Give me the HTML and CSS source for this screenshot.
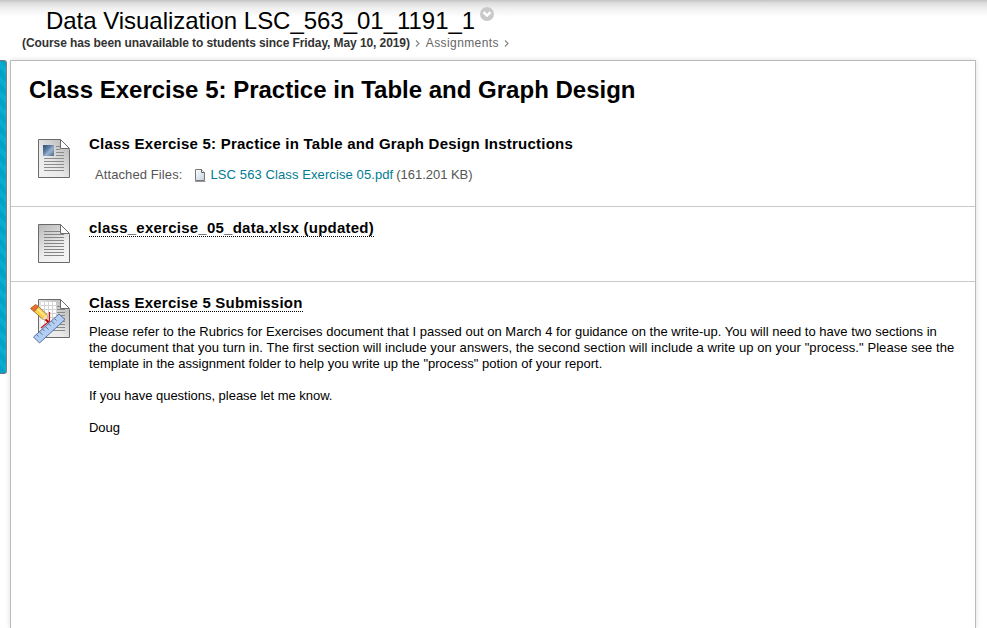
FILE: index.html
```html
<!DOCTYPE html>
<html lang="en">
<head>
<meta charset="utf-8">
<title>Assignments</title>
<link rel="stylesheet" href="styles.css">
</head>
<body>
<header class="crumbs">
  <div class="course"><span class="course-name">Data Visualization LSC_563_01_1191_1</span>
    <svg class="chevron" width="14" height="14" viewBox="0 0 14 14"><circle cx="7" cy="7" r="7" fill="#c9c9c9"/><path d="M3.500 5.200L7 8.500L10.500 5.200" fill="none" stroke="#fff" stroke-width="2.400"/></svg>
  </div>
  <nav class="path"><strong class="notice">(Course has been unavailable to students since Friday, May 10, 2019)</strong>
    <svg class="sep" width="5" height="7" viewBox="0 0 5 7"><path d="M1 .5L4 3.500L1 6.500" fill="none" stroke="#888" stroke-width="1.200"/></svg>
    <span class="crumb">Assignments</span>
    <svg class="sep" width="5" height="7" viewBox="0 0 5 7"><path d="M1 .5L4 3.500L1 6.500" fill="none" stroke="#888" stroke-width="1.200"/></svg>
  </nav>
</header>
<div class="frame">
  <aside class="menu-handle"></aside>
  <main class="content">
    <h1>Class Exercise 5: Practice in Table and Graph Design</h1>
    <section class="item first">
      <svg class="icon" width="42" height="48" viewBox="0 0 42 48">
        <defs><linearGradient id="paper" x1="1" y1="0" x2="0" y2="1"><stop offset="0" stop-color="#b0b0b0"/><stop offset=".6" stop-color="#e9e9e9"/><stop offset="1" stop-color="#f2f2f2"/></linearGradient>
        <linearGradient id="sheet" x1="0" y1="0" x2=".5" y2="1"><stop offset="0" stop-color="#b8b8b8"/><stop offset=".7" stop-color="#ececec"/><stop offset="1" stop-color="#f4f4f4"/></linearGradient>
        <linearGradient id="photo" x1="0" y1="0" x2="1" y2="1"><stop stop-color="#315277"/><stop offset=".35" stop-color="#56779c"/><stop offset=".6" stop-color="#9bb4d0"/><stop offset="1" stop-color="#49698e"/></linearGradient></defs>
        <path d="M8.500 1.500H30.500L39.500 11.500V39.500H8.500Z" fill="url(#paper)" stroke="#6a6a6a"/>
        <path d="M30.500 1.500V10.500H39.500Z" fill="#fff" stroke="#6a6a6a"/>
        <path d="M26 8.500h4M26 11.500h4M26 14.500h8M26 17.500h8M14 20.500h20M14 23.500h20M14 26.500h20M14 29.500h20M14 32.500h20" stroke="#8b8b8b"/>
        <rect x="13" y="7" width="11" height="11" fill="url(#photo)"/>
      </svg>
      <div class="body">
        <h2><span class="t1">Class Exercise 5: Practice in Table and Graph Design Instructions</span></h2>
        <div class="files"><span class="label">Attached Files:</span>
          <svg class="file" width="12" height="13" viewBox="0 0 12 13"><defs><linearGradient id="leaf" x1="0" y1="0" x2="1" y2="1"><stop stop-color="#fff"/><stop offset="1" stop-color="#c2d0dc"/></linearGradient></defs><path d="M1.500 .5H7.500L10.500 3.500V11.500H1.500Z" fill="url(#leaf)" stroke="#777"/><path d="M7.500 .5V3.500H10.500" fill="#fff" stroke="#666"/><path d="M1 12.500H11.500" stroke="#999"/></svg>
          <a class="link">LSC 563 Class Exercise 05.pdf</a><span class="size">(161.201 KB)</span>
        </div>
      </div>
    </section>
    <section class="item second">
      <svg class="icon" width="42" height="48" viewBox="0 0 42 48">
        <path d="M8.500 1.500H30.500L39.500 11.500V39.500H8.500Z" fill="url(#sheet)" stroke="#6a6a6a"/>
        <path d="M30.500 1.500V10.500H39.500Z" fill="#fff" stroke="#6a6a6a"/>
        <path d="M14 8.500h16M14 11.500h20M14 14.500h20M14 17.500h20M14 20.500h20M14 23.500h20M14 26.500h20M14 29.500h20M14 32.500h20" stroke="#858585"/>
      </svg>
      <div class="body"><h2><span class="dotted t2">class_exercise_05_data.xlsx (updated)</span></h2></div>
    </section>
    <section class="item third">
      <svg class="icon" width="42" height="48" viewBox="0 0 42 48">
        <path d="M8.500 1.500H30.500L39.500 11.500V39.500H8.500Z" fill="url(#paper)" stroke="#6a6a6a"/>
        <path d="M30.500 1.500V10.500H39.500Z" fill="#fff" stroke="#6a6a6a"/>
        <path d="M11 4H26V26H11Z" fill="#fff"/>
        <path d="M11 7.500H26M11 11.500H26M11 15.500H26M11 19.500H26M14.500 4V26M18.500 4V26M22.500 4V26" stroke="#d2d2d2"/>
        <path d="M27 8.500h3M27 11.500h8M27 14.500h8M27 17.500h8M25 20.500h10M25 23.500h10M25 26.500h10M20 29.500h15M17 32.500h18" stroke="#888"/>
        <path d="M19.500 14V23L11 30" stroke="#c01818" stroke-width="1.200" fill="none"/>
        <path d="M29 16L35 21.500L9.500 45L3.500 39Z" fill="#b2cff3" stroke="#5871a0"/>
        <path d="M6.500 36.500l2 2M9.500 33.800l3 3M12.500 31.100l2 2M15.500 28.500l3 3M18.500 25.800l2 2M21.500 23.100l3 3M24.500 20.500l2 2" stroke="#5871a0"/>
        <path d="M4 13.500L8.500 8.500L17 16.500L17.500 22.500L12.500 21Z" fill="#ffd04c" stroke="#806536" stroke-width=".8"/>
        <path d="M7.500 11L14.500 17.500" stroke="#fff0a0" stroke-width="1.200"/>
        <path d="M.5 10.500L5.500 6.500L8.500 8.500L4 13.500Z" fill="#e8712c" stroke="#a85726" stroke-width=".8"/>
        <path d="M12.500 21L17 16.500L18 22.500Z" fill="#f5dfb9"/><path d="M15.500 21.500L18.500 24" stroke="#c10000" stroke-width="2"/>
      </svg>
      <div class="body"><h2><span class="dotted t3">Class Exercise 5 Submission</span></h2>
        <div class="copy"><p><span class="l1">Please refer to the Rubrics for Exercises document that I passed out on March 4 for guidance on the write-up. You will need to have two sections in</span><br><span class="l2">the document that you turn in. The first section will include your answers, the second section will include a write up on your "process." Please see the</span><br><span class="l3">template in the assignment folder to help you write up the "process" potion of your report.</span></p>
        <p class="l4">If you have questions, please let me know.</p><p class="l4">Doug</p></div>
      </div>
    </section>
  </main>
</div>
</body>
</html>
```
FILE: styles.css
```css
* { box-sizing: border-box; }
html { height: 100%; overflow: hidden; }
body { margin: 0; height: 628px; display: flex; flex-direction: column; font-family: "Liberation Sans", Arial, sans-serif; color: #000; background: #fff; overflow: hidden; white-space: nowrap; }
svg { display: block; flex: none; }
.crumbs { height: 60px; flex: none; padding-top: 7px; background: linear-gradient(#c4c4c4 0, #dedede 3px, #f1f1f1 9px, #fff 17px); }
.course { display: flex; height: 28px; padding-left: 46px; font-size: 24px; line-height: 28px; letter-spacing: -.028px; }
.chevron { margin-left: 5px; }
.path { display: flex; align-items: center; height: 16px; padding-left: 22px; font-size: 12px; line-height: 16px; }
.notice { color: #333; letter-spacing: -.09px; }
.sep { margin: 1px 5.5px 0; }
.crumb { color: #666; letter-spacing: .4px; }
.frame { display: flex; flex: 1; min-height: 0; }
.menu-handle { width: 7px; height: 314px; margin-right: 3px; border: 1px solid #777; border-left: 0; border-radius: 0 3px 3px 0; background: repeating-linear-gradient(45deg, #00a3c7 0 5px, #08accf 5px 10px); }
.content { width: 966px; border: 1px solid #bbb; border-bottom: 0; box-shadow: 0 0 5px #ddd; }
h1 { margin: 0; height: 71px; padding: 15px 0 0 18px; font-size: 24px; line-height: 28px; }
.item { display: flex; padding-left: 19px; border-bottom: 1px solid #c9c9c9; }
.body { margin-left: 17px; }
.first { height: 75px; padding-top: 6px; }
.second, .third { padding-top: 16px; }
.second { height: 75px; }
.third { border: 0; }
h2 { margin: -4px 0 0; height: 19px; font-size: 15px; line-height: 18px; }
.first h2 { margin-top: -3px; height: 18px; }
.dotted { display: inline-block; height: 18px; border-bottom: 1px dotted #000; }
.t1 { letter-spacing: .23px; }
.t2 { letter-spacing: .243px; }
.t3 { letter-spacing: .22px; }
.files { display: flex; align-items: center; padding: 14px 0 0 6px; font-size: 13px; line-height: 16px; color: #555; }
.label { letter-spacing: .1px; }
.file { margin: 1px 5px 0 11px; }
.link { color: #017b92; letter-spacing: .1px; }
.size { margin-left: 3px; letter-spacing: -.04px; }
.copy { margin-top: 11px; font-size: 13px; line-height: 16px; }
.l1, .l3 { letter-spacing: .021px; }
.l2 { letter-spacing: .067px; }
.l4 { letter-spacing: -.02px; }
p { margin: 0 0 16px; }
```
